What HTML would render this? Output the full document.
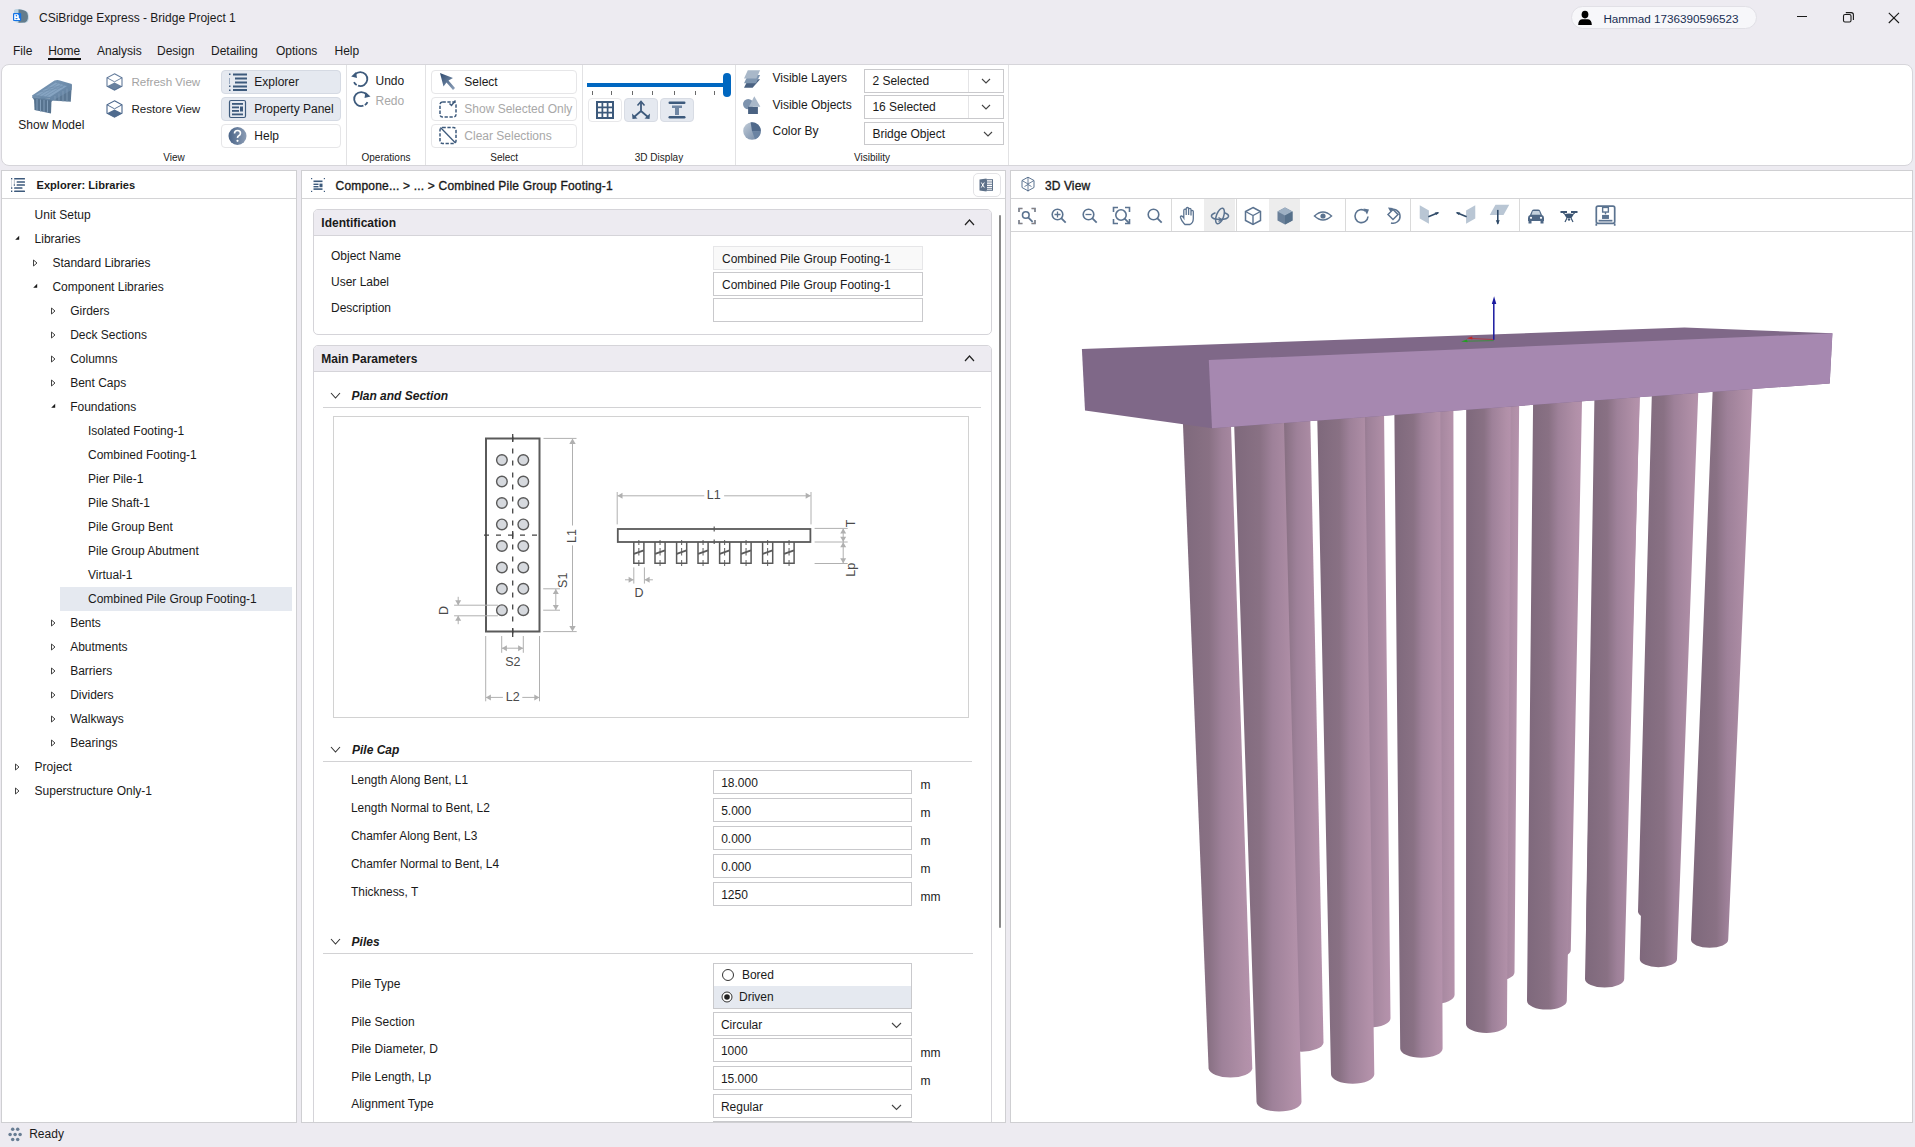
<!DOCTYPE html>
<html><head><meta charset="utf-8"><title>CSiBridge Express - Bridge Project 1</title>
<style>
html,body{margin:0;padding:0}
body{width:1915px;height:1147px;overflow:hidden;position:relative;background:#EDEBF1;font-family:"Liberation Sans",sans-serif;font-size:12px;color:#1a1a1a}
.t{position:absolute;line-height:1;white-space:nowrap}
.b{position:absolute}
.s{position:absolute;overflow:visible}
</style></head>
<body>
<svg class="s" style="left:8px;top:4px;" width="28" height="24" viewBox="0 0 28 24">
      <path d="M6 6 Q8 4.6 11 5 L15.5 6 Q18.5 6.8 19.8 8.5 Q21.2 11 20.8 14.5 Q20.3 18.3 17.5 18.8 L10 18.9 L6 17 Z" fill="#B9D2E2"/>
      <path d="M10.5 5.5 Q13 5.2 15.5 6.2 Q18.3 7 19.3 9 Q20.3 11.5 19.8 14.8 Q19.3 18 17 18.6 L10.5 18.8 Z" fill="#647C8C"/>
      <rect x="5" y="9" width="8.2" height="8" rx="1.1" fill="#1473E6"/>
      <path d="M6.2 10.2 H9.8 L10.8 11.5 V13.8 L12 15 V16 H6.2 Z" fill="#fff"/>
      <circle cx="8.4" cy="11.8" r="0.8" fill="#1473E6"/><ellipse cx="8.5" cy="14.6" rx="1.2" ry="0.7" fill="#1473E6"/>
    </svg>
<div class="t" style="left:39.0px;top:12.3px;font-size:12px;color:#1a1a1a;font-weight:normal;font-style:normal;">CSiBridge Express - Bridge Project 1</div>
<div class="b" style="left:1571px;top:6px;width:186px;height:23px;background:#F7F7FA;border:1px solid #E1E0E6;border-radius:12px;box-sizing:border-box"></div>
<svg class="s" style="left:1577px;top:10px;" width="16" height="16" viewBox="0 0 16 16">
      <ellipse cx="8" cy="4.6" rx="3.4" ry="3.8" fill="#000"/>
      <path d="M1.2 15 Q1.2 9.6 5 9.2 L11 9.2 Q14.8 9.6 14.8 15 Z" fill="#000"/>
    </svg>
<div class="t" style="left:1603.4px;top:13.1px;font-size:11.7px;color:#172E52;font-weight:normal;font-style:normal;">Hammad 1736390596523</div>
<div class="b" style="left:1797px;top:16px;width:10px;height:1px;background:#1a1a1a"></div>
<svg class="s" style="left:1842px;top:11px;" width="13" height="13" viewBox="0 0 13 13">
      <rect x="1.5" y="3.5" width="7.5" height="7.5" rx="1.5" fill="none" stroke="#1a1a1a" stroke-width="1.1"/>
      <path d="M3.8 1.6 H9.2 Q11.4 1.6 11.4 3.8 V9" fill="none" stroke="#1a1a1a" stroke-width="1.1"/>
    </svg>
<svg class="s" style="left:1888px;top:12px;" width="12" height="12" viewBox="0 0 12 12"><path d="M0.8 0.8 L11 11 M11 0.8 L0.8 11" stroke="#1a1a1a" stroke-width="1.1"/></svg>
<div class="t" style="left:13.0px;top:45.1px;font-size:12px;color:#1a1a1a;font-weight:normal;font-style:normal;">File</div>
<div class="t" style="left:48.2px;top:45.1px;font-size:12px;color:#1a1a1a;font-weight:normal;font-style:normal;">Home</div>
<div class="t" style="left:97.0px;top:45.1px;font-size:12px;color:#1a1a1a;font-weight:normal;font-style:normal;">Analysis</div>
<div class="t" style="left:157.0px;top:45.1px;font-size:12px;color:#1a1a1a;font-weight:normal;font-style:normal;">Design</div>
<div class="t" style="left:211.0px;top:45.1px;font-size:12px;color:#1a1a1a;font-weight:normal;font-style:normal;">Detailing</div>
<div class="t" style="left:276.0px;top:45.1px;font-size:12px;color:#1a1a1a;font-weight:normal;font-style:normal;">Options</div>
<div class="t" style="left:334.5px;top:45.1px;font-size:12px;color:#1a1a1a;font-weight:normal;font-style:normal;">Help</div>
<div class="b" style="left:48px;top:58px;width:33px;height:2px;background:#111"></div>
<div class="b" style="left:1px;top:64px;width:1912px;height:102px;background:#fff;border:1px solid #D6D5DA;border-radius:8px;box-sizing:border-box"></div>
<div class="b" style="left:346px;top:65px;width:1px;height:100px;background:#E2E2E4"></div>
<div class="b" style="left:425px;top:65px;width:1px;height:100px;background:#E2E2E4"></div>
<div class="b" style="left:582px;top:65px;width:1px;height:100px;background:#E2E2E4"></div>
<div class="b" style="left:735px;top:65px;width:1px;height:100px;background:#E2E2E4"></div>
<div class="b" style="left:1008px;top:65px;width:1px;height:100px;background:#E2E2E4"></div>
<div class="t" style="left:-26.0px;width:400px;text-align:center;top:153.2px;font-size:10px;color:#1a1a1a;font-weight:normal;font-style:normal;">View</div>
<div class="t" style="left:186.0px;width:400px;text-align:center;top:153.2px;font-size:10px;color:#1a1a1a;font-weight:normal;font-style:normal;">Operations</div>
<div class="t" style="left:304.2px;width:400px;text-align:center;top:153.2px;font-size:10px;color:#1a1a1a;font-weight:normal;font-style:normal;">Select</div>
<div class="t" style="left:459.0px;width:400px;text-align:center;top:153.2px;font-size:10px;color:#1a1a1a;font-weight:normal;font-style:normal;">3D Display</div>
<div class="t" style="left:672.0px;width:400px;text-align:center;top:153.2px;font-size:10px;color:#1a1a1a;font-weight:normal;font-style:normal;">Visibility</div>
<svg class="s" style="left:26px;top:72px;" width="54" height="48" viewBox="0 0 54 48">
      <defs><linearGradient id="bm" x1="0" y1="0" x2="1" y2="1"><stop offset="0" stop-color="#7E9CBA"/><stop offset="1" stop-color="#5F7E9D"/></linearGradient></defs>
      <path d="M24.5 26.5 L45.8 12.5 L44.8 29.8 L25.9 28.6 Z" fill="#5B7793"/>
      <path d="M6 23.5 L28.5 8.5 Q31 7.6 33 8.2 L45.8 12 L45.5 18 L25 29.5 L24 26.5 L6.5 25.5 Z" fill="url(#bm)"/>
      <path d="M9 23 L29 10.5 L41 14 L24 25 Z" fill="#86A4C2"/>
      <path d="M9 23 L29 10.5 M12 24 L32 11.5 M16 24.3 L35 12.5 M20 24.6 L38 13.3 M14 20 L37 15 M19 16.5 L40 13.5" stroke="#6D8BA9" stroke-width="0.6"/>
      <path d="M6 25 L25 26.5 L25.5 30 L8 28 Z" fill="#6584A2"/>
      <path d="M8 26.5 L25.5 28.5 L25 41.5 L8.5 38 Z" fill="#56728E"/>
      <path d="M11 27 V38.5 M14.5 27.5 V39.5 M18 28 V40 M21.5 28.3 V40.8" stroke="#86A2BE" stroke-width="0.9"/>
      <path d="M29 24 V29 M33 21.5 V29.2 M37 19 V29.4 M41 16.5 V29.6" stroke="#7F9BB7" stroke-width="0.9"/>
    </svg>
<div class="t" style="left:18.3px;top:119.0px;font-size:12px;color:#1a1a1a;font-weight:normal;font-style:normal;">Show Model</div>
<svg class="s" style="left:106px;top:73px;" width="18" height="19" viewBox="0 0 18 19">
      <path d="M8.5 0.8 L16 4.8 L16 13.2 L8.5 17.2 L1 13.2 L1 4.8 Z" fill="#fff" stroke="#48648A" stroke-width="1.1" opacity="0.85"/>
      <path d="M1 4.8 L8.5 8.8 L16 4.8" fill="none" stroke="#48648A" stroke-width="0.9" opacity="0.85"/>
      <path d="M1 13.2 L8.5 9.5 L16 13.2 L8.5 17.2 Z" fill="#4F6B8E" opacity="0.85"/>
    </svg>
<svg class="s" style="left:106px;top:100px;" width="18" height="19" viewBox="0 0 18 19">
      <path d="M8.5 0.8 L16 4.8 L16 13.2 L8.5 17.2 L1 13.2 L1 4.8 Z" fill="#fff" stroke="#48648A" stroke-width="1.1" opacity="1"/>
      <path d="M1 4.8 L8.5 8.8 L16 4.8" fill="none" stroke="#48648A" stroke-width="0.9" opacity="1"/>
      <path d="M1 13.2 L8.5 9.5 L16 13.2 L8.5 17.2 Z" fill="#4F6B8E" opacity="1"/>
    </svg>
<div class="t" style="left:131.5px;top:75.6px;font-size:11.6px;color:#A3A3A3;font-weight:normal;font-style:normal;">Refresh View</div>
<div class="t" style="left:131.5px;top:102.7px;font-size:11.6px;color:#1a1a1a;font-weight:normal;font-style:normal;">Restore View</div>
<div class="b" style="left:221px;top:70px;width:120px;height:24px;background:#E5E9F0;border:1px solid #D5DAE3;border-radius:4px;box-sizing:border-box"></div>
<div class="b" style="left:221px;top:97px;width:120px;height:24px;background:#E5E9F0;border:1px solid #D5DAE3;border-radius:4px;box-sizing:border-box"></div>
<div class="b" style="left:221px;top:124px;width:120px;height:24px;background:#fff;border:1px solid #E6E6E8;border-radius:4px;box-sizing:border-box"></div>
<svg class="s" style="left:228px;top:72px;" width="20" height="20" viewBox="0 0 20 20">
      <rect x="5" y="1.5" width="14" height="2" fill="#3D5A7C"/><rect x="7" y="5.5" width="12" height="2" fill="#3D5A7C"/>
      <rect x="7" y="9.5" width="12" height="2" fill="#3D5A7C"/><rect x="5" y="13.5" width="14" height="2" fill="#3D5A7C"/>
      <rect x="5" y="17" width="14" height="2" fill="#3D5A7C"/>
      <rect x="1" y="1.5" width="1.5" height="1.5" fill="#3D5A7C"/><rect x="1" y="6" width="1" height="6" fill="#9AAAC0"/>
      <rect x="1" y="13.5" width="1.5" height="1.5" fill="#3D5A7C"/><rect x="1" y="17.5" width="1.5" height="1.5" fill="#3D5A7C"/>
    </svg>
<svg class="s" style="left:228px;top:99px;" width="20" height="20" viewBox="0 0 20 20">
      <rect x="1.5" y="1.5" width="16" height="17" rx="1.5" fill="none" stroke="#3D5A7C" stroke-width="1.2"/>
      <rect x="4" y="4" width="11" height="1.8" fill="#3D5A7C"/><rect x="4" y="7.5" width="7" height="1.8" fill="#3D5A7C"/>
      <rect x="12" y="7.5" width="3" height="5" fill="#3D5A7C"/><rect x="4" y="11" width="7" height="1.8" fill="#3D5A7C"/>
      <rect x="4" y="14.5" width="11" height="1.8" fill="#3D5A7C"/>
    </svg>
<svg class="s" style="left:228px;top:126px;" width="20" height="20" viewBox="0 0 20 20">
      <defs><linearGradient id="hq" x1="0" y1="0" x2="1" y2="0"><stop offset="0" stop-color="#4A6488"/><stop offset="1" stop-color="#8C9DB5"/></linearGradient></defs>
      <circle cx="9.5" cy="10" r="9" fill="url(#hq)"/>
      <path d="M6.5 7.5 Q6.5 4.5 9.5 4.5 Q12.5 4.5 12.5 7.3 Q12.5 9 10.5 10 Q9.5 10.6 9.5 12" fill="none" stroke="#fff" stroke-width="1.6"/>
      <circle cx="9.5" cy="14.8" r="1.1" fill="#fff"/>
    </svg>
<div class="t" style="left:254.3px;top:75.5px;font-size:12px;color:#1a1a1a;font-weight:normal;font-style:normal;">Explorer</div>
<div class="t" style="left:254.3px;top:102.5px;font-size:12px;color:#1a1a1a;font-weight:normal;font-style:normal;">Property Panel</div>
<div class="t" style="left:254.3px;top:129.5px;font-size:12px;color:#1a1a1a;font-weight:normal;font-style:normal;">Help</div>
<svg class="s" style="left:350px;top:70px;" width="21" height="18" viewBox="0 0 21 18">
      <path d="M5 4.5 A7 7 0 1 1 4 12" fill="none" stroke="#3D5A7C" stroke-width="1.8" stroke-dasharray="30 1.5 4 1.5"/>
      <path d="M1.2 6.5 L6 2 L7 8 Z" fill="#3D5A7C"/>
    </svg>
<svg class="s" style="left:351px;top:90px;" width="21" height="18" viewBox="0 0 21 18">
      <path d="M15.5 4.5 A7 7 0 1 0 16.5 12" fill="none" stroke="#3D5A7C" stroke-width="1.8" stroke-dasharray="30 1.5 4 1.5"/>
      <path d="M19.5 6.5 L14.5 2 L13.5 8 Z" fill="#3D5A7C"/>
    </svg>
<div class="t" style="left:375.5px;top:74.6px;font-size:12px;color:#1a1a1a;font-weight:normal;font-style:normal;">Undo</div>
<div class="t" style="left:375.5px;top:94.7px;font-size:12px;color:#A8A8A8;font-weight:normal;font-style:normal;">Redo</div>
<div class="b" style="left:431px;top:70px;width:146px;height:24px;background:#fff;border:1px solid #E6E6E8;border-radius:4px;box-sizing:border-box"></div>
<div class="b" style="left:431px;top:97px;width:146px;height:24px;background:#fff;border:1px solid #E6E6E8;border-radius:4px;box-sizing:border-box"></div>
<div class="b" style="left:431px;top:124px;width:146px;height:24px;background:#fff;border:1px solid #E6E6E8;border-radius:4px;box-sizing:border-box"></div>
<svg class="s" style="left:439px;top:72px;" width="18" height="20" viewBox="0 0 18 20">
      <defs><linearGradient id="ar" x1="0" y1="0" x2="1" y2="1"><stop offset="0" stop-color="#2F4B70"/><stop offset="1" stop-color="#8EA1BA"/></linearGradient></defs>
      <path d="M1 1 L14 6 L9.5 8.5 L16 16 L14 18 L7.5 10.5 L4.5 14.5 Z" fill="url(#ar)"/>
    </svg>
<svg class="s" style="left:439px;top:99px;" width="19" height="20" viewBox="0 0 19 20">
      <rect x="1" y="3" width="16" height="15" rx="2.5" fill="none" stroke="#3D5A7C" stroke-width="1.5" stroke-dasharray="3.3 1.6"/>
      <path d="M10.5 4.5 L12.5 6.5 L16.5 1.5" fill="none" stroke="#3D5A7C" stroke-width="1.5"/>
    </svg>
<svg class="s" style="left:439px;top:126px;" width="19" height="20" viewBox="0 0 19 20">
      <rect x="1" y="1.5" width="16" height="16" rx="2.5" fill="none" stroke="#3D5A7C" stroke-width="1.5" stroke-dasharray="3.3 1.6"/>
      <path d="M1.5 1.5 L16.5 17" stroke="#3D5A7C" stroke-width="1.3"/>
    </svg>
<div class="t" style="left:464.3px;top:75.9px;font-size:12px;color:#1a1a1a;font-weight:normal;font-style:normal;">Select</div>
<div class="t" style="left:464.3px;top:103.0px;font-size:12px;color:#A8A8A8;font-weight:normal;font-style:normal;">Show Selected Only</div>
<div class="t" style="left:464.3px;top:129.7px;font-size:12px;color:#A8A8A8;font-weight:normal;font-style:normal;">Clear Selections</div>
<div class="b" style="left:587px;top:83px;width:141px;height:4px;background:#0067C0"></div>
<div class="b" style="left:723px;top:73px;width:8px;height:24px;background:#0067C0;border-radius:4px"></div>
<div class="b" style="left:592px;top:91px;width:1px;height:4px;background:#6A6A6A"></div>
<div class="b" style="left:611px;top:91px;width:1px;height:4px;background:#6A6A6A"></div>
<div class="b" style="left:632px;top:91px;width:1px;height:4px;background:#6A6A6A"></div>
<div class="b" style="left:652px;top:91px;width:1px;height:4px;background:#6A6A6A"></div>
<div class="b" style="left:674px;top:91px;width:1px;height:4px;background:#6A6A6A"></div>
<div class="b" style="left:695px;top:91px;width:1px;height:4px;background:#6A6A6A"></div>
<div class="b" style="left:714px;top:91px;width:1px;height:4px;background:#6A6A6A"></div>
<div class="b" style="left:588px;top:98px;width:34px;height:24px;background:#fff;border:1px solid #E8E8EA;border-radius:4px;box-sizing:border-box"></div>
<div class="b" style="left:624px;top:98px;width:34px;height:24px;background:#E5E9F0;border:1px solid #D8DCE4;border-radius:4px;box-sizing:border-box"></div>
<div class="b" style="left:660px;top:98px;width:34px;height:24px;background:#E5E9F0;border:1px solid #D8DCE4;border-radius:4px;box-sizing:border-box"></div>
<svg class="s" style="left:595px;top:100px;" width="20" height="20" viewBox="0 0 20 20">
      <rect x="1" y="1" width="18" height="18" fill="#3D5A7C"/>
      <rect x="3" y="3" width="3.5" height="3.5" fill="#fff"/><rect x="8.25" y="3" width="3.5" height="3.5" fill="#fff"/><rect x="13.5" y="3" width="3.5" height="3.5" fill="#fff"/>
      <rect x="3" y="8.25" width="3.5" height="3.5" fill="#fff"/><rect x="8.25" y="8.25" width="3.5" height="3.5" fill="#fff"/><rect x="13.5" y="8.25" width="3.5" height="3.5" fill="#fff"/>
      <rect x="3" y="13.5" width="3.5" height="3.5" fill="#fff"/><rect x="8.25" y="13.5" width="3.5" height="3.5" fill="#fff"/><rect x="13.5" y="13.5" width="3.5" height="3.5" fill="#fff"/>
    </svg>
<svg class="s" style="left:631px;top:100px;" width="20" height="20" viewBox="0 0 20 20">
      <path d="M10 11 V2.5 M10 11 L2.5 17.5 M10 11 L17.5 17.5" stroke="#3D5A7C" stroke-width="1.8"/>
      <path d="M6.5 5.5 L10 1.5 L13.5 5.5" fill="none" stroke="#3D5A7C" stroke-width="1.5"/>
      <path d="M1 13.5 L1.5 19 L6.5 18.5 Z" fill="#3D5A7C"/><path d="M19 13.5 L18.5 19 L13.5 18.5 Z" fill="#3D5A7C"/>
    </svg>
<svg class="s" style="left:667px;top:100px;" width="20" height="20" viewBox="0 0 20 20">
      <rect x="1.5" y="1.5" width="17" height="2.5" rx="1.2" fill="#3D5A7C"/>
      <rect x="1.5" y="16" width="17" height="2.5" rx="1.2" fill="#3D5A7C"/>
      <rect x="5" y="5.5" width="10" height="2.5" fill="#6F86A3"/>
      <rect x="8" y="8" width="4" height="7" fill="#6F86A3"/>
    </svg>
<svg class="s" style="left:742px;top:69px;" width="20" height="20" viewBox="0 0 20 20">
      <path d="M2 18.8 L6.2 10.3 L18.1 10.3 L10.6 18.8 Z" fill="#4A6282"/>
      <path d="M2 14.3 L6 6 L18.1 6 L14 14.3 Z" fill="#7F96B0"/>
      <path d="M2 9.6 L5.8 1.2 L18.1 1.2 L14.4 9.6 Z" fill="#A9B8C9"/>
    </svg>
<svg class="s" style="left:742px;top:95px;" width="20" height="20" viewBox="0 0 20 20">
      <circle cx="6.2" cy="9.1" r="5.2" fill="#7D93AE"/>
      <rect x="6.1" y="11.8" width="9.8" height="7.2" fill="#4A6282"/>
      <path d="M12.3 1.3 L18.4 11.8 L6.9 11.8 Z" fill="#A9B8C9"/>
    </svg>
<svg class="s" style="left:742px;top:121px;" width="20" height="20" viewBox="0 0 20 20">
      <defs><linearGradient id="pie" x1="0" y1="0" x2="1" y2="1"><stop offset="0" stop-color="#C2CDD9"/><stop offset="1" stop-color="#6F86A3"/></linearGradient></defs>
      <circle cx="10" cy="10" r="8.8" fill="url(#pie)"/>
      <path d="M10 10 L8.6 1.3 A8.8 8.8 0 0 1 18.8 10.5 Z" fill="#50698A"/>
      <path d="M10 10 L18.8 10.5 A8.8 8.8 0 0 1 13 18.3 Z" fill="#6A83A2"/>
    </svg>
<div class="t" style="left:772.5px;top:72.3px;font-size:12px;color:#1a1a1a;font-weight:normal;font-style:normal;">Visible Layers</div>
<div class="t" style="left:772.5px;top:98.5px;font-size:12px;color:#1a1a1a;font-weight:normal;font-style:normal;">Visible Objects</div>
<div class="t" style="left:772.5px;top:124.9px;font-size:12px;color:#1a1a1a;font-weight:normal;font-style:normal;">Color By</div>
<div class="b" style="left:864px;top:69px;width:140px;height:24px;background:#fff;border:1px solid #C9C9CC;box-sizing:border-box"></div>
<div class="b" style="left:968px;top:70px;width:1px;height:22px;background:#E4E4E6"></div>
<div class="t" style="left:872.4px;top:75.0px;font-size:12px;color:#1a1a1a;font-weight:normal;font-style:normal;">2 Selected</div>
<svg class="s" style="left:981px;top:78px;" width="10" height="6" viewBox="0 0 10 6"><path d="M1 1 L5.0 5 L9 1" fill="none" stroke="#444" stroke-width="1.1"/></svg>
<div class="b" style="left:864px;top:95px;width:140px;height:24px;background:#fff;border:1px solid #C9C9CC;box-sizing:border-box"></div>
<div class="b" style="left:968px;top:96px;width:1px;height:22px;background:#E4E4E6"></div>
<div class="t" style="left:872.4px;top:101.0px;font-size:12px;color:#1a1a1a;font-weight:normal;font-style:normal;">16 Selected</div>
<svg class="s" style="left:981px;top:104px;" width="10" height="6" viewBox="0 0 10 6"><path d="M1 1 L5.0 5 L9 1" fill="none" stroke="#444" stroke-width="1.1"/></svg>
<div class="b" style="left:864px;top:122px;width:140px;height:23px;background:#fff;border:1px solid #C9C9CC;box-sizing:border-box"></div>
<div class="t" style="left:872.4px;top:128.0px;font-size:12px;color:#1a1a1a;font-weight:normal;font-style:normal;">Bridge Object</div>
<svg class="s" style="left:983px;top:131px;" width="10" height="6" viewBox="0 0 10 6"><path d="M1 1 L5.0 5 L9 1" fill="none" stroke="#444" stroke-width="1.1"/></svg>
<div class="b" style="left:1px;top:170px;width:296px;height:953px;background:#fff;border:1px solid #CFCFD2;box-sizing:border-box"></div>
<div class="b" style="left:2px;top:198px;width:294px;height:1px;background:#D4D4D6"></div>
<svg class="s" style="left:10px;top:177px;" width="17" height="16" viewBox="0 0 17 16">
      <rect x="4.1" y="1" width="10.9" height="1.6" rx="0.5" fill="#3D5A7C"/><rect x="6.6" y="4.2" width="8.4" height="1.6" rx="0.5" fill="#3D5A7C"/>
      <rect x="6.6" y="7.2" width="8.4" height="1.6" rx="0.5" fill="#3D5A7C"/><rect x="4.1" y="10.2" width="8.4" height="1.6" rx="0.5" fill="#3D5A7C"/>
      <rect x="4.1" y="13.4" width="10.9" height="1.6" rx="0.5" fill="#3D5A7C"/>
      <rect x="1" y="1" width="1.3" height="1.5" fill="#3D5A7C"/><rect x="1.2" y="2.5" width="0.7" height="7.8" fill="#C2CAD4"/>
      <rect x="1" y="10.3" width="1.3" height="1.5" fill="#3D5A7C"/><rect x="1" y="13.5" width="1.3" height="1.5" fill="#3D5A7C"/>
      <rect x="3.9" y="2.4" width="0.7" height="5" fill="#9BA6B4"/><rect x="3.8" y="7.2" width="1" height="1.7" fill="#3D5A7C"/>
    </svg>
<div class="t" style="left:36.5px;top:179.5px;font-size:11.1px;color:#1a1a1a;font-weight:bold;font-style:normal;">Explorer: Libraries</div>
<div class="t" style="left:34.6px;top:209.0px;font-size:12px;color:#1a1a1a;font-weight:normal;font-style:normal;">Unit Setup</div>
<svg class="s" style="left:14px;top:235px;" width="8" height="8" viewBox="0 0 8 8"><path d="M5.2 0.8 L5.2 4.8 L1.2 4.8 Z" fill="#1a1a1a"/></svg>
<div class="t" style="left:34.6px;top:233.0px;font-size:12px;color:#1a1a1a;font-weight:normal;font-style:normal;">Libraries</div>
<svg class="s" style="left:32px;top:259px;" width="8" height="8" viewBox="0 0 8 8"><path d="M1.5 1 L5 4 L1.5 7 Z" fill="none" stroke="#444" stroke-width="1"/></svg>
<div class="t" style="left:52.4px;top:257.0px;font-size:12px;color:#1a1a1a;font-weight:normal;font-style:normal;">Standard Libraries</div>
<svg class="s" style="left:32px;top:283px;" width="8" height="8" viewBox="0 0 8 8"><path d="M5.2 0.8 L5.2 4.8 L1.2 4.8 Z" fill="#1a1a1a"/></svg>
<div class="t" style="left:52.4px;top:281.0px;font-size:12px;color:#1a1a1a;font-weight:normal;font-style:normal;">Component Libraries</div>
<svg class="s" style="left:50px;top:307px;" width="8" height="8" viewBox="0 0 8 8"><path d="M1.5 1 L5 4 L1.5 7 Z" fill="none" stroke="#444" stroke-width="1"/></svg>
<div class="t" style="left:70.2px;top:305.0px;font-size:12px;color:#1a1a1a;font-weight:normal;font-style:normal;">Girders</div>
<svg class="s" style="left:50px;top:331px;" width="8" height="8" viewBox="0 0 8 8"><path d="M1.5 1 L5 4 L1.5 7 Z" fill="none" stroke="#444" stroke-width="1"/></svg>
<div class="t" style="left:70.2px;top:329.0px;font-size:12px;color:#1a1a1a;font-weight:normal;font-style:normal;">Deck Sections</div>
<svg class="s" style="left:50px;top:355px;" width="8" height="8" viewBox="0 0 8 8"><path d="M1.5 1 L5 4 L1.5 7 Z" fill="none" stroke="#444" stroke-width="1"/></svg>
<div class="t" style="left:70.2px;top:353.0px;font-size:12px;color:#1a1a1a;font-weight:normal;font-style:normal;">Columns</div>
<svg class="s" style="left:50px;top:379px;" width="8" height="8" viewBox="0 0 8 8"><path d="M1.5 1 L5 4 L1.5 7 Z" fill="none" stroke="#444" stroke-width="1"/></svg>
<div class="t" style="left:70.2px;top:377.0px;font-size:12px;color:#1a1a1a;font-weight:normal;font-style:normal;">Bent Caps</div>
<svg class="s" style="left:50px;top:403px;" width="8" height="8" viewBox="0 0 8 8"><path d="M5.2 0.8 L5.2 4.8 L1.2 4.8 Z" fill="#1a1a1a"/></svg>
<div class="t" style="left:70.2px;top:401.0px;font-size:12px;color:#1a1a1a;font-weight:normal;font-style:normal;">Foundations</div>
<div class="t" style="left:88.0px;top:425.0px;font-size:12px;color:#1a1a1a;font-weight:normal;font-style:normal;">Isolated Footing-1</div>
<div class="t" style="left:88.0px;top:449.0px;font-size:12px;color:#1a1a1a;font-weight:normal;font-style:normal;">Combined Footing-1</div>
<div class="t" style="left:88.0px;top:473.0px;font-size:12px;color:#1a1a1a;font-weight:normal;font-style:normal;">Pier Pile-1</div>
<div class="t" style="left:88.0px;top:497.0px;font-size:12px;color:#1a1a1a;font-weight:normal;font-style:normal;">Pile Shaft-1</div>
<div class="t" style="left:88.0px;top:521.0px;font-size:12px;color:#1a1a1a;font-weight:normal;font-style:normal;">Pile Group Bent</div>
<div class="t" style="left:88.0px;top:545.0px;font-size:12px;color:#1a1a1a;font-weight:normal;font-style:normal;">Pile Group Abutment</div>
<div class="t" style="left:88.0px;top:569.0px;font-size:12px;color:#1a1a1a;font-weight:normal;font-style:normal;">Virtual-1</div>
<div class="b" style="left:60px;top:587px;width:232px;height:24px;background:#E5E9F0"></div>
<div class="t" style="left:88.0px;top:593.0px;font-size:12px;color:#1a1a1a;font-weight:normal;font-style:normal;">Combined Pile Group Footing-1</div>
<svg class="s" style="left:50px;top:619px;" width="8" height="8" viewBox="0 0 8 8"><path d="M1.5 1 L5 4 L1.5 7 Z" fill="none" stroke="#444" stroke-width="1"/></svg>
<div class="t" style="left:70.2px;top:617.0px;font-size:12px;color:#1a1a1a;font-weight:normal;font-style:normal;">Bents</div>
<svg class="s" style="left:50px;top:643px;" width="8" height="8" viewBox="0 0 8 8"><path d="M1.5 1 L5 4 L1.5 7 Z" fill="none" stroke="#444" stroke-width="1"/></svg>
<div class="t" style="left:70.2px;top:641.0px;font-size:12px;color:#1a1a1a;font-weight:normal;font-style:normal;">Abutments</div>
<svg class="s" style="left:50px;top:667px;" width="8" height="8" viewBox="0 0 8 8"><path d="M1.5 1 L5 4 L1.5 7 Z" fill="none" stroke="#444" stroke-width="1"/></svg>
<div class="t" style="left:70.2px;top:665.0px;font-size:12px;color:#1a1a1a;font-weight:normal;font-style:normal;">Barriers</div>
<svg class="s" style="left:50px;top:691px;" width="8" height="8" viewBox="0 0 8 8"><path d="M1.5 1 L5 4 L1.5 7 Z" fill="none" stroke="#444" stroke-width="1"/></svg>
<div class="t" style="left:70.2px;top:689.0px;font-size:12px;color:#1a1a1a;font-weight:normal;font-style:normal;">Dividers</div>
<svg class="s" style="left:50px;top:715px;" width="8" height="8" viewBox="0 0 8 8"><path d="M1.5 1 L5 4 L1.5 7 Z" fill="none" stroke="#444" stroke-width="1"/></svg>
<div class="t" style="left:70.2px;top:713.0px;font-size:12px;color:#1a1a1a;font-weight:normal;font-style:normal;">Walkways</div>
<svg class="s" style="left:50px;top:739px;" width="8" height="8" viewBox="0 0 8 8"><path d="M1.5 1 L5 4 L1.5 7 Z" fill="none" stroke="#444" stroke-width="1"/></svg>
<div class="t" style="left:70.2px;top:737.0px;font-size:12px;color:#1a1a1a;font-weight:normal;font-style:normal;">Bearings</div>
<svg class="s" style="left:14px;top:763px;" width="8" height="8" viewBox="0 0 8 8"><path d="M1.5 1 L5 4 L1.5 7 Z" fill="none" stroke="#444" stroke-width="1"/></svg>
<div class="t" style="left:34.6px;top:761.0px;font-size:12px;color:#1a1a1a;font-weight:normal;font-style:normal;">Project</div>
<svg class="s" style="left:14px;top:787px;" width="8" height="8" viewBox="0 0 8 8"><path d="M1.5 1 L5 4 L1.5 7 Z" fill="none" stroke="#444" stroke-width="1"/></svg>
<div class="t" style="left:34.6px;top:785.0px;font-size:12px;color:#1a1a1a;font-weight:normal;font-style:normal;">Superstructure Only-1</div>
<div class="b" style="left:301px;top:170px;width:705px;height:953px;background:#fff;border:1px solid #CFCFD2;box-sizing:border-box"></div>
<div class="b" style="left:302px;top:198px;width:703px;height:1px;background:#D4D4D6"></div>
<svg class="s" style="left:310px;top:177px;" width="16" height="16" viewBox="0 0 16 16">
      <rect x="3.5" y="3.5" width="9" height="1.6" fill="#3D5A7C"/><rect x="3.5" y="6.6" width="5" height="1.4" fill="#3D5A7C"/>
      <rect x="9.5" y="6.6" width="3" height="3.6" fill="#3D5A7C"/><rect x="3.5" y="9" width="5" height="1.4" fill="#3D5A7C"/>
      <rect x="3.5" y="11.3" width="9" height="1.6" fill="#3D5A7C"/>
      <rect x="1" y="1" width="1.2" height="1.2" fill="#3D5A7C"/><rect x="13.8" y="1" width="1.2" height="1.2" fill="#3D5A7C"/>
      <rect x="1" y="13.8" width="1.2" height="1.2" fill="#3D5A7C"/><rect x="13.8" y="13.8" width="1.2" height="1.2" fill="#3D5A7C"/>
    </svg>
<div class="t" style="left:335.6px;top:180.2px;font-size:12px;color:#1a1a1a;font-weight:normal;font-style:normal;letter-spacing:0.19px;-webkit-text-stroke:0.35px #1a1a1a">Compone... &gt; ... &gt; Combined Pile Group Footing-1</div>
<div class="b" style="left:973px;top:173px;width:28px;height:24px;background:#fff;border:1px solid #E3E3E6;border-radius:5px;box-sizing:border-box"></div>
<svg class="s" style="left:979px;top:178px;" width="16" height="14" viewBox="0 0 16 14">
      <path d="M0.5 1.5 L7.5 0.5 L7.5 13.5 L0.5 12.5 Z" fill="#5E7189"/>
      <rect x="7.5" y="1.7" width="6" height="10.6" fill="#fff" stroke="#5E7189" stroke-width="1"/>
      <path d="M8 4 H13 M8 6.3 H13 M8 8.6 H13 M8 10.7 H13" stroke="#5E7189" stroke-width="0.9"/>
      <path d="M2.3 4.5 L5.3 9.5 M5.3 4.5 L2.3 9.5" stroke="#fff" stroke-width="1"/>
    </svg>
<div style="position:absolute;left:302px;top:199px;width:703px;height:923px;overflow:hidden">
<div style="position:absolute;left:-302px;top:-199px;width:1915px;height:1147px">
<div class="b" style="left:313px;top:209px;width:679px;height:126px;background:#fff;border:1px solid #D5D4D9;border-radius:5px;box-sizing:border-box"></div>
<div class="b" style="left:314px;top:210px;width:677px;height:26px;background:#EDEBF1;border-bottom:1px solid #D5D4D9;border-radius:4px 4px 0 0;box-sizing:border-box"></div>
<div class="t" style="left:321.3px;top:217.0px;font-size:12px;color:#1a1a1a;font-weight:bold;font-style:normal;">Identification</div>
<svg class="s" style="left:964px;top:219px;" width="11" height="7" viewBox="0 0 11 7"><path d="M1 6 L5.5 1 L10 6" fill="none" stroke="#222" stroke-width="1.2"/></svg>
<div class="t" style="left:331.0px;top:249.7px;font-size:12px;color:#1a1a1a;font-weight:normal;font-style:normal;">Object Name</div>
<div class="t" style="left:331.0px;top:276.0px;font-size:12px;color:#1a1a1a;font-weight:normal;font-style:normal;">User Label</div>
<div class="t" style="left:331.0px;top:301.6px;font-size:12px;color:#1a1a1a;font-weight:normal;font-style:normal;">Description</div>
<div class="b" style="left:713px;top:246px;width:210px;height:24px;background:#F9F9F9;border:1px solid #E6E6E8;box-sizing:border-box"></div>
<div class="t" style="left:722.0px;top:253.0px;font-size:12px;color:#1a1a1a;font-weight:normal;font-style:normal;">Combined Pile Group Footing-1</div>
<div class="b" style="left:713px;top:272px;width:210px;height:24px;background:#fff;border:1px solid #C9C9CC;box-sizing:border-box"></div>
<div class="t" style="left:722.0px;top:279.0px;font-size:12px;color:#1a1a1a;font-weight:normal;font-style:normal;">Combined Pile Group Footing-1</div>
<div class="b" style="left:713px;top:298px;width:210px;height:24px;background:#fff;border:1px solid #C9C9CC;box-sizing:border-box"></div>
<div class="b" style="left:313px;top:345px;width:679px;height:855px;background:#fff;border:1px solid #D5D4D9;border-radius:5px;box-sizing:border-box"></div>
<div class="b" style="left:314px;top:346px;width:677px;height:26px;background:#EDEBF1;border-bottom:1px solid #D5D4D9;border-radius:4px 4px 0 0;box-sizing:border-box"></div>
<div class="t" style="left:321.3px;top:353.0px;font-size:12px;color:#1a1a1a;font-weight:bold;font-style:normal;">Main Parameters</div>
<svg class="s" style="left:964px;top:355px;" width="11" height="7" viewBox="0 0 11 7"><path d="M1 6 L5.5 1 L10 6" fill="none" stroke="#222" stroke-width="1.2"/></svg>
<svg class="s" style="left:329.5px;top:391.5px;" width="11" height="7" viewBox="0 0 11 7"><path d="M1 1 L5.5 6 L10 1" fill="none" stroke="#333" stroke-width="1.1"/></svg>
<div class="t" style="left:351.4px;top:390.0px;font-size:12px;color:#1a1a1a;font-weight:bold;font-style:italic;">Plan and Section</div>
<div class="b" style="left:323px;top:407px;width:658px;height:1px;background:#D2D2D4"></div>
<div class="b" style="left:333px;top:416px;width:636px;height:302px;background:#fff;border:1px solid #D2D2D2;box-sizing:border-box"></div>
<svg class="s" style="left:333px;top:416px;" width="636" height="302" viewBox="0 0 636 302"><g transform="translate(-333 -416)"><rect x="486" y="438.5" width="53.5" height="193" fill="none" stroke="#5A5A5A" stroke-width="2"/><line x1="512.7" y1="436" x2="512.7" y2="635" stroke="#444" stroke-width="1.3" stroke-dasharray="5 7" stroke-dashoffset="-0.5"/><line x1="483" y1="535.2" x2="541" y2="535.2" stroke="#444" stroke-width="1.3" stroke-dasharray="5 7" stroke-dashoffset="-1"/><line x1="512.7" y1="434" x2="512.7" y2="442" stroke="#444" stroke-width="1.3"/><line x1="512.7" y1="628" x2="512.7" y2="637" stroke="#444" stroke-width="1.3"/><line x1="512.7" y1="531" x2="512.7" y2="539" stroke="#444" stroke-width="1.3"/><circle cx="501.9" cy="460" r="5.3" fill="#D6D9DE" stroke="#5A5A5A" stroke-width="1.4"/><circle cx="523.3" cy="460" r="5.3" fill="#D6D9DE" stroke="#5A5A5A" stroke-width="1.4"/><circle cx="501.9" cy="481.5" r="5.3" fill="#D6D9DE" stroke="#5A5A5A" stroke-width="1.4"/><circle cx="523.3" cy="481.5" r="5.3" fill="#D6D9DE" stroke="#5A5A5A" stroke-width="1.4"/><circle cx="501.9" cy="503" r="5.3" fill="#D6D9DE" stroke="#5A5A5A" stroke-width="1.4"/><circle cx="523.3" cy="503" r="5.3" fill="#D6D9DE" stroke="#5A5A5A" stroke-width="1.4"/><circle cx="501.9" cy="524.4" r="5.3" fill="#D6D9DE" stroke="#5A5A5A" stroke-width="1.4"/><circle cx="523.3" cy="524.4" r="5.3" fill="#D6D9DE" stroke="#5A5A5A" stroke-width="1.4"/><circle cx="501.9" cy="546" r="5.3" fill="#D6D9DE" stroke="#5A5A5A" stroke-width="1.4"/><circle cx="523.3" cy="546" r="5.3" fill="#D6D9DE" stroke="#5A5A5A" stroke-width="1.4"/><circle cx="501.9" cy="567.5" r="5.3" fill="#D6D9DE" stroke="#5A5A5A" stroke-width="1.4"/><circle cx="523.3" cy="567.5" r="5.3" fill="#D6D9DE" stroke="#5A5A5A" stroke-width="1.4"/><circle cx="501.9" cy="588.8" r="5.3" fill="#D6D9DE" stroke="#5A5A5A" stroke-width="1.4"/><circle cx="523.3" cy="588.8" r="5.3" fill="#D6D9DE" stroke="#5A5A5A" stroke-width="1.4"/><circle cx="501.9" cy="610.2" r="5.3" fill="#D6D9DE" stroke="#5A5A5A" stroke-width="1.4"/><circle cx="523.3" cy="610.2" r="5.3" fill="#D6D9DE" stroke="#5A5A5A" stroke-width="1.4"/><line x1="543.5" y1="438.4" x2="576.5" y2="438.4" stroke="#B0B0B0" stroke-width="1"/><line x1="543.2" y1="631.6" x2="576.7" y2="631.6" stroke="#B0B0B0" stroke-width="1"/><line x1="572.5" y1="440" x2="572.5" y2="525.5" stroke="#B0B0B0" stroke-width="1"/><line x1="572.5" y1="545.4" x2="572.5" y2="630" stroke="#B0B0B0" stroke-width="1"/><path d="M572.5 438.6 L569.3 444.1 L575.7 444.1 Z" fill="#B0B0B0"/><path d="M572.5 631.4 L569.3 625.9 L575.7 625.9 Z" fill="#B0B0B0"/><text x="0" y="0" transform="translate(571.5 536) rotate(-90)" font-family="Liberation Sans" font-size="12.5" fill="#4A4A4A" text-anchor="middle" dominant-baseline="central">L1</text><line x1="543.2" y1="588.8" x2="560" y2="588.8" stroke="#B0B0B0" stroke-width="1"/><line x1="543.2" y1="610.2" x2="560" y2="610.2" stroke="#B0B0B0" stroke-width="1"/><line x1="555.8" y1="589" x2="555.8" y2="610" stroke="#B0B0B0" stroke-width="1"/><path d="M555.8 589 L552.8 594 L558.8 594 Z" fill="#B0B0B0"/><path d="M555.8 610 L552.8 605 L558.8 605 Z" fill="#B0B0B0"/><text x="0" y="0" transform="translate(562.5 580.3) rotate(-90)" font-family="Liberation Sans" font-size="12.5" fill="#4A4A4A" text-anchor="middle" dominant-baseline="central">S1</text><line x1="454.1" y1="605.2" x2="497.9" y2="605.2" stroke="#B0B0B0" stroke-width="1"/><line x1="454.1" y1="615.8" x2="497.9" y2="615.8" stroke="#B0B0B0" stroke-width="1"/><line x1="458.2" y1="596.8" x2="458.2" y2="605" stroke="#B0B0B0" stroke-width="1"/><line x1="458.2" y1="616" x2="458.2" y2="624.2" stroke="#B0B0B0" stroke-width="1"/><path d="M458.2 605.2 L455.2 600.2 L461.2 600.2 Z" fill="#B0B0B0"/><path d="M458.2 615.8 L455.2 620.8 L461.2 620.8 Z" fill="#B0B0B0"/><text x="0" y="0" transform="translate(443.5 610.5) rotate(-90)" font-family="Liberation Sans" font-size="12.5" fill="#4A4A4A" text-anchor="middle" dominant-baseline="central">D</text><line x1="501.7" y1="636" x2="501.7" y2="652.8" stroke="#B0B0B0" stroke-width="1"/><line x1="523.3" y1="636" x2="523.3" y2="652.8" stroke="#B0B0B0" stroke-width="1"/><line x1="502" y1="648.2" x2="523" y2="648.2" stroke="#B0B0B0" stroke-width="1"/><path d="M501.9 648.2 L506.9 645.2 L506.9 651.2 Z" fill="#B0B0B0"/><path d="M523.1 648.2 L518.1 645.2 L518.1 651.2 Z" fill="#B0B0B0"/><text x="512.8" y="661.5" font-family="Liberation Sans" font-size="12.5" fill="#4A4A4A" text-anchor="middle" dominant-baseline="central">S2</text><line x1="485.7" y1="636" x2="485.7" y2="701.3" stroke="#B0B0B0" stroke-width="1"/><line x1="539.5" y1="636" x2="539.5" y2="701.3" stroke="#B0B0B0" stroke-width="1"/><line x1="486" y1="697.4" x2="502.9" y2="697.4" stroke="#B0B0B0" stroke-width="1"/><line x1="522.3" y1="697.4" x2="539.3" y2="697.4" stroke="#B0B0B0" stroke-width="1"/><path d="M485.9 697.4 L490.9 694.4 L490.9 700.4 Z" fill="#B0B0B0"/><path d="M539.3 697.4 L534.3 694.4 L534.3 700.4 Z" fill="#B0B0B0"/><text x="512.8" y="696.8" font-family="Liberation Sans" font-size="12.5" fill="#4A4A4A" text-anchor="middle" dominant-baseline="central">L2</text><line x1="617.2" y1="492" x2="617.2" y2="524.4" stroke="#B0B0B0" stroke-width="1"/><line x1="811" y1="492" x2="811" y2="524.4" stroke="#B0B0B0" stroke-width="1"/><line x1="617.5" y1="495.8" x2="704.3" y2="495.8" stroke="#B0B0B0" stroke-width="1"/><line x1="724.1" y1="495.8" x2="810.7" y2="495.8" stroke="#B0B0B0" stroke-width="1"/><path d="M617.5 495.8 L622.5 492.8 L622.5 498.8 Z" fill="#B0B0B0"/><path d="M810.7 495.8 L805.7 492.8 L805.7 498.8 Z" fill="#B0B0B0"/><text x="713.8" y="494.5" font-family="Liberation Sans" font-size="12.5" fill="#4A4A4A" text-anchor="middle" dominant-baseline="central">L1</text><rect x="617.8" y="529" width="192.6" height="13" fill="none" stroke="#5A5A5A" stroke-width="1.8"/><line x1="714.2" y1="526.5" x2="714.2" y2="531.5" stroke="#5A5A5A" stroke-width="1.2"/><line x1="714.2" y1="539.5" x2="714.2" y2="544" stroke="#5A5A5A" stroke-width="1.2"/><path d="M633.8000000000001 542 V563.3 H643.9 V542" fill="none" stroke="#5A5A5A" stroke-width="1.5"/><path d="M633.9 553.8 L643.8000000000001 550.3" stroke="#5A5A5A" stroke-width="1.9"/><line x1="638.85" y1="540" x2="638.85" y2="545" stroke="#5A5A5A" stroke-width="1"/><line x1="638.85" y1="548" x2="638.85" y2="555.5" stroke="#5A5A5A" stroke-width="1"/><line x1="638.85" y1="560" x2="638.85" y2="566" stroke="#5A5A5A" stroke-width="1"/><path d="M655.0 542 V563.3 H665.0999999999999 V542" fill="none" stroke="#5A5A5A" stroke-width="1.5"/><path d="M655.0999999999999 553.8 L665.0 550.3" stroke="#5A5A5A" stroke-width="1.9"/><line x1="660.05" y1="540" x2="660.05" y2="545" stroke="#5A5A5A" stroke-width="1"/><line x1="660.05" y1="548" x2="660.05" y2="555.5" stroke="#5A5A5A" stroke-width="1"/><line x1="660.05" y1="560" x2="660.05" y2="566" stroke="#5A5A5A" stroke-width="1"/><path d="M676.6 542 V563.3 H686.6999999999999 V542" fill="none" stroke="#5A5A5A" stroke-width="1.5"/><path d="M676.6999999999999 553.8 L686.6 550.3" stroke="#5A5A5A" stroke-width="1.9"/><line x1="681.65" y1="540" x2="681.65" y2="545" stroke="#5A5A5A" stroke-width="1"/><line x1="681.65" y1="548" x2="681.65" y2="555.5" stroke="#5A5A5A" stroke-width="1"/><line x1="681.65" y1="560" x2="681.65" y2="566" stroke="#5A5A5A" stroke-width="1"/><path d="M698.0 542 V563.3 H708.0999999999999 V542" fill="none" stroke="#5A5A5A" stroke-width="1.5"/><path d="M698.0999999999999 553.8 L708.0 550.3" stroke="#5A5A5A" stroke-width="1.9"/><line x1="703.05" y1="540" x2="703.05" y2="545" stroke="#5A5A5A" stroke-width="1"/><line x1="703.05" y1="548" x2="703.05" y2="555.5" stroke="#5A5A5A" stroke-width="1"/><line x1="703.05" y1="560" x2="703.05" y2="566" stroke="#5A5A5A" stroke-width="1"/><path d="M719.6 542 V563.3 H729.6999999999999 V542" fill="none" stroke="#5A5A5A" stroke-width="1.5"/><path d="M719.6999999999999 553.8 L729.6 550.3" stroke="#5A5A5A" stroke-width="1.9"/><line x1="724.65" y1="540" x2="724.65" y2="545" stroke="#5A5A5A" stroke-width="1"/><line x1="724.65" y1="548" x2="724.65" y2="555.5" stroke="#5A5A5A" stroke-width="1"/><line x1="724.65" y1="560" x2="724.65" y2="566" stroke="#5A5A5A" stroke-width="1"/><path d="M741.0 542 V563.3 H751.0999999999999 V542" fill="none" stroke="#5A5A5A" stroke-width="1.5"/><path d="M741.0999999999999 553.8 L751.0 550.3" stroke="#5A5A5A" stroke-width="1.9"/><line x1="746.05" y1="540" x2="746.05" y2="545" stroke="#5A5A5A" stroke-width="1"/><line x1="746.05" y1="548" x2="746.05" y2="555.5" stroke="#5A5A5A" stroke-width="1"/><line x1="746.05" y1="560" x2="746.05" y2="566" stroke="#5A5A5A" stroke-width="1"/><path d="M762.6 542 V563.3 H772.6999999999999 V542" fill="none" stroke="#5A5A5A" stroke-width="1.5"/><path d="M762.6999999999999 553.8 L772.6 550.3" stroke="#5A5A5A" stroke-width="1.9"/><line x1="767.65" y1="540" x2="767.65" y2="545" stroke="#5A5A5A" stroke-width="1"/><line x1="767.65" y1="548" x2="767.65" y2="555.5" stroke="#5A5A5A" stroke-width="1"/><line x1="767.65" y1="560" x2="767.65" y2="566" stroke="#5A5A5A" stroke-width="1"/><path d="M784.0 542 V563.3 H794.0999999999999 V542" fill="none" stroke="#5A5A5A" stroke-width="1.5"/><path d="M784.0999999999999 553.8 L794.0 550.3" stroke="#5A5A5A" stroke-width="1.9"/><line x1="789.05" y1="540" x2="789.05" y2="545" stroke="#5A5A5A" stroke-width="1"/><line x1="789.05" y1="548" x2="789.05" y2="555.5" stroke="#5A5A5A" stroke-width="1"/><line x1="789.05" y1="560" x2="789.05" y2="566" stroke="#5A5A5A" stroke-width="1"/><line x1="814.6" y1="528.4" x2="847.7" y2="528.4" stroke="#B0B0B0" stroke-width="1"/><line x1="814.6" y1="542" x2="847.7" y2="542" stroke="#B0B0B0" stroke-width="1"/><line x1="814.6" y1="563.5" x2="847.7" y2="563.5" stroke="#B0B0B0" stroke-width="1"/><line x1="843.2" y1="529" x2="843.2" y2="563" stroke="#B0B0B0" stroke-width="1"/><path d="M843.2 528.6 L840.2 533.6 L846.2 533.6 Z" fill="#B0B0B0"/><path d="M843.2 541.8 L840.2 536.8 L846.2 536.8 Z" fill="#B0B0B0"/><path d="M843.2 542.2 L840.2 547.2 L846.2 547.2 Z" fill="#B0B0B0"/><path d="M843.2 563.3 L840.2 558.3 L846.2 558.3 Z" fill="#B0B0B0"/><text x="0" y="0" transform="translate(850.5 523.5) rotate(-90)" font-family="Liberation Sans" font-size="12.5" fill="#4A4A4A" text-anchor="middle" dominant-baseline="central">T</text><text x="0" y="0" transform="translate(851 569.8) rotate(-90)" font-family="Liberation Sans" font-size="12.5" fill="#4A4A4A" text-anchor="middle" dominant-baseline="central">Lp</text><line x1="633.8" y1="567.4" x2="633.8" y2="583.6" stroke="#B0B0B0" stroke-width="1"/><line x1="644.4" y1="567.4" x2="644.4" y2="583.6" stroke="#B0B0B0" stroke-width="1"/><line x1="625" y1="579.8" x2="633.5" y2="579.8" stroke="#B0B0B0" stroke-width="1"/><line x1="644.7" y1="579.8" x2="652.9" y2="579.8" stroke="#B0B0B0" stroke-width="1"/><path d="M633.6 579.8 L628.6 576.8 L628.6 582.8 Z" fill="#B0B0B0"/><path d="M644.6 579.8 L649.6 576.8 L649.6 582.8 Z" fill="#B0B0B0"/><text x="639" y="592.5" font-family="Liberation Sans" font-size="12.5" fill="#4A4A4A" text-anchor="middle" dominant-baseline="central">D</text></g></svg>
<svg class="s" style="left:329.5px;top:745.5px;" width="11" height="7" viewBox="0 0 11 7"><path d="M1 1 L5.5 6 L10 1" fill="none" stroke="#333" stroke-width="1.1"/></svg>
<div class="t" style="left:352.0px;top:743.8px;font-size:12px;color:#1a1a1a;font-weight:bold;font-style:italic;">Pile Cap</div>
<div class="b" style="left:323px;top:761px;width:649px;height:1px;background:#D2D2D4"></div>
<div class="t" style="left:351.0px;top:774.7px;font-size:11.9px;color:#1a1a1a;font-weight:normal;font-style:normal;">Length Along Bent, L1</div>
<div class="b" style="left:713px;top:770px;width:199px;height:24px;background:#fff;border:1px solid #C9C9CC;box-sizing:border-box"></div>
<div class="t" style="left:721.2px;top:777.0px;font-size:12px;color:#1a1a1a;font-weight:normal;font-style:normal;">18.000</div>
<div class="t" style="left:920.4px;top:779.0px;font-size:12px;color:#1a1a1a;font-weight:normal;font-style:normal;">m</div>
<div class="t" style="left:351.0px;top:802.7px;font-size:11.9px;color:#1a1a1a;font-weight:normal;font-style:normal;">Length Normal to Bent, L2</div>
<div class="b" style="left:713px;top:798px;width:199px;height:24px;background:#fff;border:1px solid #C9C9CC;box-sizing:border-box"></div>
<div class="t" style="left:721.2px;top:805.0px;font-size:12px;color:#1a1a1a;font-weight:normal;font-style:normal;">5.000</div>
<div class="t" style="left:920.4px;top:807.0px;font-size:12px;color:#1a1a1a;font-weight:normal;font-style:normal;">m</div>
<div class="t" style="left:351.0px;top:830.7px;font-size:11.9px;color:#1a1a1a;font-weight:normal;font-style:normal;">Chamfer Along Bent, L3</div>
<div class="b" style="left:713px;top:826px;width:199px;height:24px;background:#fff;border:1px solid #C9C9CC;box-sizing:border-box"></div>
<div class="t" style="left:721.2px;top:833.0px;font-size:12px;color:#1a1a1a;font-weight:normal;font-style:normal;">0.000</div>
<div class="t" style="left:920.4px;top:835.0px;font-size:12px;color:#1a1a1a;font-weight:normal;font-style:normal;">m</div>
<div class="t" style="left:351.0px;top:858.7px;font-size:11.9px;color:#1a1a1a;font-weight:normal;font-style:normal;">Chamfer Normal to Bent, L4</div>
<div class="b" style="left:713px;top:854px;width:199px;height:24px;background:#fff;border:1px solid #C9C9CC;box-sizing:border-box"></div>
<div class="t" style="left:721.2px;top:861.0px;font-size:12px;color:#1a1a1a;font-weight:normal;font-style:normal;">0.000</div>
<div class="t" style="left:920.4px;top:863.0px;font-size:12px;color:#1a1a1a;font-weight:normal;font-style:normal;">m</div>
<div class="t" style="left:351.0px;top:886.7px;font-size:11.9px;color:#1a1a1a;font-weight:normal;font-style:normal;">Thickness, T</div>
<div class="b" style="left:713px;top:882px;width:199px;height:24px;background:#fff;border:1px solid #C9C9CC;box-sizing:border-box"></div>
<div class="t" style="left:721.2px;top:889.0px;font-size:12px;color:#1a1a1a;font-weight:normal;font-style:normal;">1250</div>
<div class="t" style="left:920.4px;top:891.0px;font-size:12px;color:#1a1a1a;font-weight:normal;font-style:normal;">mm</div>
<svg class="s" style="left:329.5px;top:937.5px;" width="11" height="7" viewBox="0 0 11 7"><path d="M1 1 L5.5 6 L10 1" fill="none" stroke="#333" stroke-width="1.1"/></svg>
<div class="t" style="left:351.6px;top:935.8px;font-size:12px;color:#1a1a1a;font-weight:bold;font-style:italic;">Piles</div>
<div class="b" style="left:323px;top:953px;width:650px;height:1px;background:#D2D2D4"></div>
<div class="t" style="left:351.2px;top:978.1px;font-size:12px;color:#1a1a1a;font-weight:normal;font-style:normal;">Pile Type</div>
<div class="b" style="left:713px;top:963px;width:199px;height:46px;background:#fff;border:1px solid #C9C9CC;box-sizing:border-box"></div>
<div class="b" style="left:714px;top:986px;width:197px;height:22px;background:#E5E9F0"></div>
<svg class="s" style="left:721px;top:968px;" width="14" height="14" viewBox="0 0 14 14"><circle cx="7" cy="7" r="5.5" fill="#fff" stroke="#333" stroke-width="1"/></svg>
<div class="t" style="left:741.9px;top:968.9px;font-size:12px;color:#1a1a1a;font-weight:normal;font-style:normal;">Bored</div>
<svg class="s" style="left:720px;top:990px;" width="14" height="14" viewBox="0 0 14 14"><circle cx="7" cy="7" r="5" fill="#fff" stroke="#333" stroke-width="1"/><circle cx="7" cy="7" r="2.8" fill="#222"/></svg>
<div class="t" style="left:739.0px;top:991.0px;font-size:12px;color:#1a1a1a;font-weight:normal;font-style:normal;">Driven</div>
<div class="t" style="left:351.2px;top:1016.0px;font-size:12px;color:#1a1a1a;font-weight:normal;font-style:normal;">Pile Section</div>
<div class="b" style="left:713px;top:1012px;width:199px;height:24px;background:#fff;border:1px solid #C9C9CC;box-sizing:border-box"></div>
<div class="t" style="left:720.9px;top:1019.0px;font-size:12px;color:#1a1a1a;font-weight:normal;font-style:normal;">Circular</div>
<svg class="s" style="left:890.5px;top:1021.5px;" width="11" height="6.5" viewBox="0 0 11 6.5"><path d="M1 1 L5.5 5.5 L10 1" fill="none" stroke="#444" stroke-width="1.1"/></svg>
<div class="t" style="left:351.2px;top:1042.5px;font-size:12px;color:#1a1a1a;font-weight:normal;font-style:normal;">Pile Diameter, D</div>
<div class="b" style="left:713px;top:1038px;width:199px;height:24px;background:#fff;border:1px solid #C9C9CC;box-sizing:border-box"></div>
<div class="t" style="left:720.9px;top:1045.0px;font-size:12px;color:#1a1a1a;font-weight:normal;font-style:normal;">1000</div>
<div class="t" style="left:920.5px;top:1047.0px;font-size:12px;color:#1a1a1a;font-weight:normal;font-style:normal;">mm</div>
<div class="t" style="left:351.2px;top:1070.9px;font-size:12px;color:#1a1a1a;font-weight:normal;font-style:normal;">Pile Length, Lp</div>
<div class="b" style="left:713px;top:1066px;width:199px;height:24px;background:#fff;border:1px solid #C9C9CC;box-sizing:border-box"></div>
<div class="t" style="left:720.9px;top:1073.0px;font-size:12px;color:#1a1a1a;font-weight:normal;font-style:normal;">15.000</div>
<div class="t" style="left:920.5px;top:1075.0px;font-size:12px;color:#1a1a1a;font-weight:normal;font-style:normal;">m</div>
<div class="t" style="left:351.2px;top:1097.8px;font-size:12px;color:#1a1a1a;font-weight:normal;font-style:normal;">Alignment Type</div>
<div class="b" style="left:713px;top:1094px;width:199px;height:24px;background:#fff;border:1px solid #C9C9CC;box-sizing:border-box"></div>
<div class="t" style="left:720.9px;top:1101.0px;font-size:12px;color:#1a1a1a;font-weight:normal;font-style:normal;">Regular</div>
<svg class="s" style="left:890.5px;top:1103.5px;" width="11" height="6.5" viewBox="0 0 11 6.5"><path d="M1 1 L5.5 5.5 L10 1" fill="none" stroke="#444" stroke-width="1.1"/></svg>
<div class="b" style="left:713px;top:1121px;width:199px;height:24px;background:#fff;border:1px solid #C9C9CC;box-sizing:border-box"></div>
</div></div>
<div class="b" style="left:999px;top:215px;width:2px;height:713px;background:#8A8A8A;border-radius:1px"></div>
<div class="b" style="left:1010px;top:170px;width:903px;height:953px;background:#fff;border:1px solid #CFCFD2;box-sizing:border-box"></div>
<div class="b" style="left:1011px;top:198px;width:901px;height:1px;background:#D4D4D6"></div>
<div class="b" style="left:1011px;top:231px;width:901px;height:1px;background:#D4D4D6"></div>
<svg class="s" style="left:1020px;top:176px;" width="16" height="16" viewBox="0 0 16 16">
      <path d="M8 1.2 L14 4.5 L14 11.5 L8 14.8 L2 11.5 L2 4.5 Z" fill="none" stroke="#5B7390" stroke-width="1"/>
      <path d="M8 1.2 V15.5 M2 4.5 L8 8 L14 4.5 M4.5 10.5 L8 8.5 L11.5 10.5" fill="none" stroke="#5B7390" stroke-width="0.9"/>
    </svg>
<div class="t" style="left:1045.0px;top:179.7px;font-size:12px;color:#1a1a1a;font-weight:normal;font-style:normal;letter-spacing:0.1px;-webkit-text-stroke:0.35px #1a1a1a">3D View</div>
<div class="b" style="left:1204px;top:199px;width:31px;height:32px;background:#EDEDED"></div>
<div class="b" style="left:1269px;top:199px;width:31px;height:32px;background:#EDEDED"></div>
<div class="b" style="left:1171px;top:199px;width:1px;height:32px;background:#DADADA"></div>
<div class="b" style="left:1236px;top:199px;width:1px;height:32px;background:#DADADA"></div>
<div class="b" style="left:1345px;top:199px;width:1px;height:32px;background:#DADADA"></div>
<div class="b" style="left:1410px;top:199px;width:1px;height:32px;background:#DADADA"></div>
<div class="b" style="left:1519px;top:199px;width:1px;height:32px;background:#DADADA"></div>
<svg class="s" style="left:1017px;top:206px;" width="20" height="20" viewBox="0 0 20 20"><path d="M2 6 V2.5 H5.5 M14.5 2.5 H18 V6 M18 14 V17.5 H14.5 M5.5 17.5 H2 V14" fill="none" stroke="#5B7390" stroke-width="1.6"/>
        <path d="M2 6 V2.5 H5.5 M14.5 2.5 H18 V6 M18 14 V17.5 H14.5 M5.5 17.5 H2 V14" fill="none" stroke="#F0A060" stroke-width="0.5" opacity="0.6"/><circle cx="8.8" cy="9" r="3.3" fill="none" stroke="#5B7390" stroke-width="1.6"/><path d="M11.11 11.309999999999999 L15.61 15.809999999999999" stroke="#5B7390" stroke-width="1.8"/></svg>
<svg class="s" style="left:1049px;top:206px;" width="20" height="20" viewBox="0 0 20 20"><circle cx="8.5" cy="8.5" r="5.3" fill="none" stroke="#5B7390" stroke-width="1.6"/><path d="M12.209999999999999 12.209999999999999 L16.71 16.71" stroke="#5B7390" stroke-width="1.8"/><path d="M5.5 8.5 H11.5 M8.5 5.5 V11.5" stroke="#5B7390" stroke-width="1.3"/></svg>
<svg class="s" style="left:1080px;top:206px;" width="20" height="20" viewBox="0 0 20 20"><circle cx="8.5" cy="8.5" r="5.3" fill="none" stroke="#5B7390" stroke-width="1.6"/><path d="M12.209999999999999 12.209999999999999 L16.71 16.71" stroke="#5B7390" stroke-width="1.8"/><path d="M5.5 8.5 H11.5" stroke="#5B7390" stroke-width="1.3"/></svg>
<svg class="s" style="left:1112px;top:206px;" width="21" height="21" viewBox="0 0 21 21"><path d="M1.5 6 V1.5 H6 M13 1.5 H17.5 V6 M17.5 13 V17.5 H13 M6 17.5 H1.5 V13" fill="none" stroke="#5B7390" stroke-width="1.6"/><circle cx="9" cy="9" r="5.2" fill="none" stroke="#5B7390" stroke-width="1.6"/><path d="M12.64 12.64 L17.14 17.14" stroke="#5B7390" stroke-width="1.8"/></svg>
<svg class="s" style="left:1145px;top:206px;" width="20" height="20" viewBox="0 0 20 20"><circle cx="8.5" cy="8.5" r="5.3" fill="none" stroke="#5B7390" stroke-width="1.6"/><path d="M12.209999999999999 12.209999999999999 L16.71 16.71" stroke="#5B7390" stroke-width="1.8"/></svg>
<svg class="s" style="left:1178px;top:206px;" width="20" height="20" viewBox="0 0 20 20"><path d="M6 17.5 Q3.5 15 2.5 11.5 Q2.2 10 3.5 10 Q4.8 10.2 5.8 12 V4.5 Q5.8 3.2 7 3.2 Q8.2 3.2 8.2 4.5 V9 V2.8 Q8.2 1.5 9.4 1.5 Q10.6 1.5 10.6 2.8 V9 V3.5 Q10.6 2.3 11.8 2.3 Q13 2.3 13 3.5 V9.5 V5.5 Q13 4.4 14.1 4.4 Q15.3 4.4 15.3 5.5 V12.5 Q15.3 17 12 18.5 H7 Z" fill="none" stroke="#5B7390" stroke-width="1.3"/></svg>
<svg class="s" style="left:1210px;top:206px;" width="20" height="20" viewBox="0 0 20 20"><ellipse cx="10" cy="10" rx="3.6" ry="8.2" fill="none" stroke="#5B7390" stroke-width="1.5" transform="rotate(20 10 10)"/>
        <path d="M5.5 6.8 Q1 8.5 1.5 10.5 Q2.5 13.5 10 13.5 Q17.5 13.5 18.5 10.5 Q19 8.5 14.5 6.8" fill="none" stroke="#5B7390" stroke-width="1.5"/>
        <path d="M8.5 11.5 L11.5 13.5 L8.5 15.5" fill="none" stroke="#5B7390" stroke-width="1.3"/></svg>
<svg class="s" style="left:1243px;top:206px;" width="20" height="20" viewBox="0 0 20 20"><path d="M10 1.5 L17.5 5.5 V14.5 L10 18.5 L2.5 14.5 V5.5 Z" fill="none" stroke="#5B7390" stroke-width="1.5"/>
        <path d="M2.5 5.5 L10 9.5 L17.5 5.5 M10 9.5 V18.5" fill="none" stroke="#5B7390" stroke-width="1.4"/></svg>
<svg class="s" style="left:1275px;top:206px;" width="20" height="20" viewBox="0 0 20 20"><path d="M10 1.5 L17.5 5.5 V14.5 L10 18.5 L2.5 14.5 V5.5 Z" fill="#6A8099"/>
        <path d="M2.5 5.5 L10 9.5 L17.5 5.5 L10 1.5 Z" fill="#9EB0C3"/><path d="M10 9.5 L17.5 5.5 V14.5 L10 18.5 Z" fill="#56708A"/></svg>
<svg class="s" style="left:1313px;top:206px;" width="20" height="20" viewBox="0 0 20 20"><path d="M1.5 10 Q10 2 18.5 10 Q10 18 1.5 10 Z" fill="none" stroke="#5B7390" stroke-width="1.5"/>
        <circle cx="10" cy="10" r="2.6" fill="#5B7390"/></svg>
<svg class="s" style="left:1352px;top:206px;" width="20" height="20" viewBox="0 0 20 20"><path d="M16 10.5 A6.5 6.5 0 1 1 13.5 5" fill="none" stroke="#5B7390" stroke-width="1.6"/>
        <path d="M11.5 2.5 L17 3.5 L15 8.5 Z" fill="#5B7390"/></svg>
<svg class="s" style="left:1384px;top:206px;" width="20" height="20" viewBox="0 0 20 20"><path d="M4 8.5 L9 3.5 L14 8.5 L9 13.5 Z" fill="none" stroke="#5B7390" stroke-width="1.5"/>
        <path d="M6 4 A7 7 0 1 1 7 17" fill="none" stroke="#5B7390" stroke-width="1.5"/>
        <path d="M4 1.5 L9 2 L6.5 6 Z" fill="#5B7390"/></svg>
<svg class="s" style="left:1418px;top:203px;" width="23" height="23" viewBox="0 0 23 23"><g transform="scale(1.15)"><path d="M1.5 2 L9.5 6.5 V18 L1.5 13.5 Z" fill="#B9C6D4"/>
        <path d="M9 12 L17.5 8.5" stroke="#2F4A68" stroke-width="1.4"/><path d="M18.5 8 L14.5 8.2 L16 10.5 Z" fill="#2F4A68"/></g></svg>
<svg class="s" style="left:1454px;top:203px;" width="23" height="23" viewBox="0 0 23 23"><g transform="scale(1.15)"><path d="M18.5 2 L10.5 6.5 V18 L18.5 13.5 Z" fill="#B9C6D4"/>
        <path d="M11 12 L2.5 8.5" stroke="#2F4A68" stroke-width="1.4"/><path d="M1.5 8 L5.5 8.2 L4 10.5 Z" fill="#2F4A68"/></g></svg>
<svg class="s" style="left:1488px;top:203px;" width="23" height="23" viewBox="0 0 23 23"><g transform="scale(1.15)"><path d="M6.5 1.5 H18.5 L13.5 10.5 H1.5 Z" fill="#B9C6D4"/>
        <path d="M8.5 6 V18" stroke="#2F4A68" stroke-width="1.4"/><path d="M8.5 19 L6.8 15 L10.2 15 Z" fill="#2F4A68"/></g></svg>
<svg class="s" style="left:1526px;top:206px;" width="20" height="20" viewBox="0 0 20 20"><path d="M2 12 Q2 9.5 4 9 L6 4.5 Q6.5 3.5 8 3.5 H12 Q13.5 3.5 14 4.5 L16 9 Q18 9.5 18 12 V15 H2 Z" fill="#4E6785"/>
        <path d="M6.8 5 H13.2 L14.5 8.8 H5.5 Z" fill="#C5D2DE"/>
        <rect x="2.5" y="15" width="3" height="2.5" fill="#4E6785"/><rect x="14.5" y="15" width="3" height="2.5" fill="#4E6785"/>
        <circle cx="5" cy="11.8" r="1.1" fill="#fff"/><circle cx="15" cy="11.8" r="1.1" fill="#fff"/></svg>
<svg class="s" style="left:1559px;top:206px;" width="20" height="20" viewBox="0 0 20 20"><path d="M1.5 6 H8 M12 6 H18.5" stroke="#3C5573" stroke-width="1.8"/>
        <path d="M5 6 V8 M15 6 V8" stroke="#3C5573" stroke-width="1.5"/>
        <path d="M5 8 Q10 7 15 8 L12.5 12 H7.5 Z" fill="#3C5573"/>
        <path d="M8 12 L6 16 M12 12 L14 16" stroke="#3C5573" stroke-width="1.2"/>
        <circle cx="10" cy="13.5" r="1.2" fill="#3C5573"/></svg>
<svg class="s" style="left:1594px;top:204px;" width="23" height="23" viewBox="0 0 23 23"><g transform="scale(1.15)"><rect x="2" y="1.8" width="16" height="15" rx="1.5" fill="none" stroke="#5B7390" stroke-width="1.5"/>
        <path d="M2 17 V19 M18 17 V19" stroke="#5B7390" stroke-width="1.5"/>
        <rect x="7.5" y="3" width="5" height="4" fill="none" stroke="#5B7390" stroke-width="1.2"/>
        <path d="M10 7 V9" stroke="#5B7390" stroke-width="1.2"/><rect x="7" y="9.5" width="6" height="3.5" fill="#5B7390"/>
        <path d="M4 14.5 H16" stroke="#5B7390" stroke-width="1.5"/></g></svg>
<svg class="s" style="left:1011px;top:232px;" width="901" height="890" viewBox="0 0 901 890"><g transform="translate(-1011 -232)"><defs>
      <linearGradient id="pg" x1="0" y1="0" x2="1" y2="0">
        <stop offset="0" stop-color="#7F687C"/><stop offset="0.12" stop-color="#816B7E"/><stop offset="0.4" stop-color="#897184"/>
        <stop offset="0.58" stop-color="#9E8199"/><stop offset="0.9" stop-color="#B190A8"/><stop offset="1" stop-color="#B592AC"/>
      </linearGradient></defs><path d="M1180.5 362.0 L1208.6 1068.6 A21.9 9.6 0 0 0 1252.3 1068.6 L1228.9 362.0 Z" fill="url(#pg)"/><path d="M1260.2 362.0 L1280.0 1042.7 A21.8 9.6 0 0 0 1323.5 1042.7 L1309.1 362.0 Z" fill="url(#pg)"/><path d="M1336.9 362.0 L1348.5 1018.2 A21.0 9.2 0 0 0 1390.5 1018.2 L1383.5 362.0 Z" fill="url(#pg)"/><path d="M1406.3 362.0 L1413.6 994.8 A20.5 9.0 0 0 0 1454.6 994.8 L1453.3 362.0 Z" fill="url(#pg)"/><path d="M1472.8 362.0 L1474.5 972.2 A20.0 8.8 0 0 0 1514.5 972.2 L1519.5 362.0 Z" fill="url(#pg)"/><path d="M1534.3 362.0 L1531.8 949.9 A19.5 8.6 0 0 0 1570.8 949.9 L1582.8 362.0 Z" fill="url(#pg)"/><path d="M1595.0 362.0 L1586.0 928.6 A19.0 8.4 0 0 0 1624.0 928.6 L1640.9 362.0 Z" fill="url(#pg)"/><path d="M1652.7 362.0 L1638.0 911.4 A18.5 8.1 0 0 0 1675.0 911.4 L1698.7 362.0 Z" fill="url(#pg)"/><path d="M1232.1 362.0 L1256.5 1101.7 A22.5 9.9 0 0 0 1301.5 1101.7 L1282.4 362.0 Z" fill="url(#pg)"/><path d="M1316.1 362.0 L1331.0 1074.2 A21.6 9.5 0 0 0 1374.3 1074.2 L1364.1 362.0 Z" fill="url(#pg)"/><path d="M1393.9 362.0 L1400.2 1048.5 A21.2 9.3 0 0 0 1442.6 1048.5 L1440.2 362.0 Z" fill="url(#pg)"/><path d="M1466.2 362.0 L1466.0 1024.0 A20.5 9.0 0 0 0 1507.0 1024.0 L1511.1 362.0 Z" fill="url(#pg)"/><path d="M1533.5 362.0 L1527.0 1000.8 A19.9 8.8 0 0 0 1566.8 1000.8 L1581.4 362.0 Z" fill="url(#pg)"/><path d="M1597.5 362.0 L1585.0 979.0 A19.6 8.6 0 0 0 1624.2 979.0 L1640.5 362.0 Z" fill="url(#pg)"/><path d="M1654.9 362.0 L1639.8 959.0 A18.6 8.2 0 0 0 1677.0 959.0 L1699.4 362.0 Z" fill="url(#pg)"/><path d="M1713.8 362.0 L1691.0 939.6 A18.6 8.2 0 0 0 1728.2 939.6 L1753.8 362.0 Z" fill="url(#pg)"/><path d="M1081.9 348.9 L1684.5 327.6 L1832.4 333.3 L1829.7 383.4 L1212 428.2 L1085 410.5 Z" fill="#7F6888"/><path d="M1208.8 360 L1832.4 333.3 L1829.7 383.4 L1212 428.2 Z" fill="#A688B0"/><path d="M1493.7 339.6 L1470 338.4" stroke="#B83030" stroke-width="0.9" opacity="0.85"/><path d="M1466.8 338.2 L1472.2 336.4 L1472.4 339.4 Z" fill="#C02828"/><path d="M1493.7 340.6 L1466 341.2" stroke="#2A9A2A" stroke-width="0.9" opacity="0.85"/><path d="M1461 341.6 L1467 339.6 L1467.6 342.2 Z" fill="#22A022"/><path d="M1493.8 339.8 V303.3" stroke="#1A1AA0" stroke-width="1.5"/><path d="M1494.1 296.3 L1491.8 304 L1496.3 304 Z" fill="#1A1AA0"/></g></svg>
<svg class="s" style="left:8px;top:1127px;" width="15" height="15" viewBox="0 0 15 15">
  <circle cx="4.7" cy="2.3" r="1.75" fill="#687D93"/><circle cx="9.7" cy="2.3" r="1.75" fill="#687D93"/>
  <circle cx="2.1" cy="7.4" r="1.75" fill="#687D93"/><circle cx="7.1" cy="7.4" r="1.75" fill="#687D93"/><circle cx="12.1" cy="7.4" r="1.75" fill="#687D93"/>
  <circle cx="4.7" cy="12.4" r="1.75" fill="#687D93"/><circle cx="9.7" cy="12.4" r="1.75" fill="#687D93"/>
</svg><div class="t" style="left:29.2px;top:1128.0px;font-size:12px;color:#1a1a1a;font-weight:normal;font-style:normal;">Ready</div>
</body></html>
